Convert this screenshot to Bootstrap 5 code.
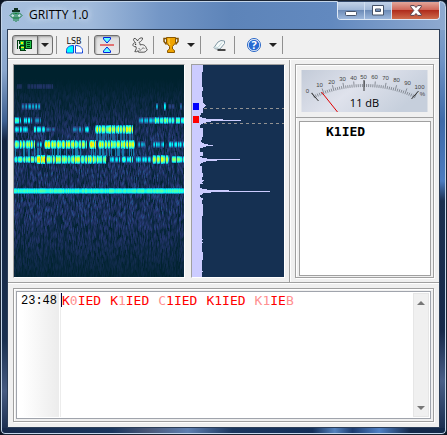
<!DOCTYPE html>
<html lang="en">
<head>
<meta charset="utf-8">
<meta name="viewport" content="width=device-width, initial-scale=1">
<title>GRITTY 1.0</title>
<link rel="stylesheet" href="https://cdn.jsdelivr.net/npm/bootstrap@5.3.0/dist/css/bootstrap.min.css">
<style>
body { background: #0b1422; font-family: "Open Sans", "Noto Sans", sans-serif; font-size: 12px; color: #000; }
svg { display: block; }
button { color: inherit; }
.app-window {
  border: 1px solid #1a2433; border-radius: 7px 7px 5px 5px; padding: 0 6px 6px;
  box-shadow: inset 0 0 0 1px #c3d5ea;
  background:
    linear-gradient(90deg, #a6bfde 0, #a0badb 90px, #7396c6 160px, #5d84b9 230px, #6289bf 330px, #8faad0 100%) top / 100% 29px no-repeat,
    linear-gradient(90deg, #16294a 0, #1b375f 25%, #4a5878 33%, #5f7fb0 42%, #1c375f 52%, #14305a 70%, #5482bd 75%, #1c3c70 79%, #4f80c4 85%, #14294a 92%) bottom / 100% 6px no-repeat,
    linear-gradient(180deg, #8faacd 0, #6f93c5 60px, #3e6aa8 120px, #4c7cc0 180px, #1b3050 200px, #16294a 330px, #4a5f88 380px, #16294a 100%) right / 8px 100% no-repeat,
    linear-gradient(180deg, #a6bfde 0, #8aa6cc 70px, #3d5f90 120px, #14233e 140px, #1a3050 340px, #465a80 390px, #16294a 100%);
}
.title-bar { height: 28px; padding-left: 2px; gap: 6px; }
.title-bar > svg { margin-top: 7px; }
.title-bar h1 { font-size: 12px; line-height: 28px; text-shadow: 0 0 6px #dbe7f6, 0 0 6px #dbe7f6; }
.caption-group { height: 19px; border: 1px solid #dfe9f5; border-top-color: #34496b; border-radius: 0 0 4px 4px; overflow: hidden; }
.caption-group button { width: 27px; border: 0; border-right: 1px solid #d0def0; background: linear-gradient(#c2d2e8 0, #a0b7d7 45%, #6d8cb8 50%, #9db8dc 100%); }
.caption-group .close-window { width: 47px; border-right: 0; background: linear-gradient(#e2a79b 0, #d0685a 45%, #b02d1c 50%, #ce6c4c 100%); }
.client-area { border: 1px solid #2c3e58; background: #f0f0f0; }
.tool-strip { height: 29px; padding: 5px 0 3px 4px; border-bottom: 1px solid #a0a0a0; }
.tool-strip .btn { --bs-btn-padding-x: 0; --bs-btn-padding-y: 0; --bs-btn-border-radius: 3px; height: 20px; line-height: 1; }
.tool-strip .pressed { border: 1px solid #6f6f6f; background: linear-gradient(#dcdcdc, #ececec); box-shadow: inset 1px 1px 2px #a0a0a0; }
.tool-strip .btn-group .pressed:first-child { padding: 0 3px; }
.tool-strip .btn-group .pressed:last-child { width: 16px; }
.tool-strip .tool-plain { border: 0; padding-left: 4px; }
.tool-strip .tool-wide { border: 0; padding-left: 7px; padding-right: 2px; }
.tool-sep { width: 1px; height: 18px; margin: 0 5px; background: #909090; }
.btn-group + .tool-sep { margin-left: 3px; }
.caret-mark { width: 0; height: 0; border: 4px solid transparent; border-top-color: #222; border-bottom: 0; }
.top-area { border-top: 1px solid #fff; border-bottom: 1px solid #a0a0a0; }
.scope-area { flex: 272 1 0; padding: 4px 4px 4px 5px; gap: 6px; border-right: 1px solid #a0a0a0; }
.side-area { flex: 139 1 0; padding: 4px 5px 4px 4px; border-left: 1px solid #fff; }
.sunken { border: 1px solid #a0a0a0; border-right-color: #fff; border-bottom-color: #fff; }
.waterfall { flex: 170 1 0; }
.spectrum { flex: 92 1 0; }
.waterfall canvas, .spectrum svg { display: block; width: 100%; height: 212px; }
.framed { border: 1px solid #a0a0a0; box-shadow: 1px 1px 0 #fff, inset 1px 1px 0 #fff; }
.meter-box { padding: 5px; border-bottom: 1px solid #a0a0a0; }
.meter-box svg { width: 100%; height: 42px; }
.calls-box { padding: 3px 2px 1px 3px; }
.calls-list { border: 1px solid #a0a0a0; background: #fff; padding: 1px 26px; font: bold 13px/18px "DejaVu Sans Mono", monospace; }
.log-area { border-top: 1px solid #fff; padding: 4px 5px 5px; }
.log-outer { padding: 2px; }
.log-inner { border: 1px solid #a0a4ac; background: #fff; padding: 1px; }
.time-gutter { width: 41px; padding-left: 3px; background: linear-gradient(90deg, #fff 10%, #ececec); font: 12px/16px "Liberation Mono", monospace; }
.decoded { border-left: 1px solid #ececec; margin-left: 1px; gap: 9px; font: 13px/16px "DejaVu Sans Mono", monospace; color: #f00; }
.decoded .weak { color: #ff9090; }
.decoded > :first-child { border-left: 1px solid #000040; height: 14px; }
.log-scroll { width: 16px; background: #f0f0f0; border: 1px solid #e6e6e6; }
.log-scroll button { height: 17px; border: 0; background: none; }
</style>
</head>
<body>
<div class="app-window d-flex flex-column min-vh-100">
  <header class="title-bar d-flex align-items-start">
    <svg width="14" height="14" viewBox="0 0 14 14" aria-hidden="true"><path d="M5 0h4v2h2v2H3V2h2z" fill="#132"/><path d="M7 4v10M5 5v8M9 5v8" stroke="#12823b" fill="none"/><path d="M1 7.500L3.500 5H6l1 1 1-1h2.500L13 7.500 10.500 10H3.500z" stroke="#12823b" fill="none"/><path d="M3 7h2v1.500H3zM9 7h2v1.500H9z" fill="#c9f0d2"/></svg>
    <h1 class="mb-0 fw-normal flex-grow-1">GRITTY 1.0</h1>
    <div class="caption-group d-flex">
      <button type="button" class="p-0 d-flex justify-content-center align-items-center" aria-label="Minimize"><svg width="12" height="13" viewBox="0 0 12 13"><rect x=".5" y="7.500" width="11" height="4" rx="1" fill="#fff" stroke="#465369"/></svg></button>
      <button type="button" class="p-0 d-flex justify-content-center align-items-center" aria-label="Maximize"><svg width="12" height="11" viewBox="0 0 12 11"><path fill-rule="evenodd" d="M.5.5h11v9.500H.5zM3.500 4h5v2.500h-5z" fill="#fff" stroke="#465369"/></svg></button>
      <button type="button" class="close-window p-0 d-flex justify-content-center align-items-center" aria-label="Close"><svg width="12" height="11" viewBox="0 0 12 11"><path d="M.7.600h3.600L6 2.500 7.700.600h3.600v1.200L8.200 5.500l3.100 3.700v1.200H7.700L6 8.500l-1.700 1.900H.7V9.200l3.100-3.700L.7 1.800z" fill="#fff" stroke="#573f4a"/></svg></button>
    </div>
  </header>

  <main class="client-area flex-grow-1 d-flex flex-column">
    <div class="tool-strip d-flex align-items-center" role="toolbar" aria-label="Main">
      <div class="btn-group">
        <button type="button" class="btn pressed" aria-label="Receive"><svg width="18" height="14" viewBox="0 0 18 14" shape-rendering="crispEdges"><path d="M1 2h3v1H2v8H1zM4 2h12v9h-6v2H4v-2H3V3h1z" fill="#003c10"/><path d="M4 3h4v4H4zM5 8h3v4H5zM10 3h5v7h-5z" fill="#1fbf45"/><path d="M5 4h2v2H5zM5 9h3v1H5z" fill="#f5f500"/><path d="M8 3h1v7H8zM11 4h3v1h-3zM11 6h3v1h-3zM11 8h3v1h-3z" fill="#00330c"/><path d="M3 6h1v2H3zM9 11h1v1H9z" fill="#c8ffd0"/></svg></button>
        <button type="button" class="btn pressed d-flex align-items-center justify-content-center" aria-label="Receive options"><span class="caret-mark"></span></button>
      </div>
      <span class="tool-sep"></span>
      <button type="button" class="btn tool-plain" aria-label="LSB"><svg width="17" height="18" viewBox="0 0 17 18"><text x="8" y="8" text-anchor="middle" font-family="DejaVu Sans, sans-serif" font-size="8" fill="#111">LSB</text><path d="M.5 17v-2.500C.5 11.500 3 9.500 7.500 9.500V17z" fill="#0ff" stroke="#1446d8"/><path d="M9.500 17V9.500c4 0 7 2 7 5V17z" fill="#fff" stroke="#1446d8"/></svg></button>
      <span class="tool-sep"></span>
      <button type="button" class="btn pressed px-1" aria-label="Center frequency"><svg width="16" height="18" viewBox="0 0 16 18"><path d="M4.500 1.500h7v1.500l-3.500 4-3.500-4zM8 11l3.500 4v1.500h-7V15z" fill="#6ff" stroke="#0022e0"/><path d="M1 9h14" stroke="#e00000"/></svg></button>
      <button type="button" class="btn tool-plain ms-2" aria-label="Fast mode"><svg width="16" height="16" viewBox="0 0 16 16"><path d="M3.500 5.500C1.500 4 1 2.500 2 1.500 3.500 1 5 2.500 5.500 4 6.500 1.500 9 .3 10.500 1 11 2.500 9 4.500 7 5.500c1 .8 1.200 1.800 1 2.500 3-1.200 6 .5 6.300 3.500 1.200.2 1.200 2 0 2.200-.5 1-1.300 1.500-2.500 1.500H6.500l-.3-1.500-1.500 1H2.800l1.500-3-.3-2C2 9.800.8 9 .9 7.800 1 6.500 2 5.800 3.500 5.500z" fill="#ededed" stroke="#444" stroke-width=".9"/><circle cx="3.600" cy="7.300" r=".7" fill="#222"/><path d="M6.500 11.500c1.500 0 2 1 1.500 2.500M9.500 12.500c.5-1.500 2-2 3-1" stroke="#555" stroke-width=".8" fill="none"/></svg></button>
      <span class="tool-sep"></span>
      <button type="button" class="btn tool-plain d-flex align-items-center" aria-label="Scores"><svg width="16" height="16" viewBox="0 0 16 16"><path d="M4 1.500H1v3l2.500 3M12 1.500h3v3l-2.500 3" stroke="#805000" stroke-width="1.500" fill="none"/><path d="M3.500.5h9v5.500L9.500 9.500V12l2 1.500v2h-7v-2l2-1.500V9.500L3.500 6z" fill="#f0a400" stroke="#8a5800"/><path d="M6 1.500V6l1 2" stroke="#ffe070" fill="none"/></svg><span class="caret-mark ms-2"></span></button>
      <span class="tool-sep"></span>
      <button type="button" class="btn tool-wide" aria-label="Clear"><svg width="14" height="12" viewBox="0 0 14 12"><path d="M1 8.500l4-5.500 3-1.500 3.500.5L11.500 4.500 7 10H2.500z" fill="#f5fafa" stroke="#8298a4"/><path d="M1.500 8L5 8.500 9 3.500" stroke="#c0d6da" fill="none"/><path d="M4.500 11h8" stroke="#111" stroke-width="1.500"/></svg></button>
      <span class="tool-sep"></span>
      <button type="button" class="btn tool-wide pe-0 d-flex align-items-center" aria-label="Help"><svg width="14" height="14" viewBox="0 0 14 14"><circle cx="7" cy="7" r="6.500" fill="#fff" stroke="#2463c5"/><circle cx="7" cy="7" r="5.300" fill="#286bd2"/><text x="7" y="11" text-anchor="middle" font-family="Open Sans, sans-serif" font-weight="700" font-size="11" fill="#fff">?</text></svg><span class="caret-mark ms-2"></span></button>
      <span class="tool-sep"></span>
    </div>

    <section class="top-area d-flex">
      <div class="scope-area d-flex">
        <div class="sunken waterfall"><canvas id="waterfall" width="170" height="212" role="img" aria-label="Waterfall"></canvas></div>
        <div class="sunken spectrum">
          <svg viewBox="0 0 92 212" preserveAspectRatio="none" shape-rendering="crispEdges" role="img" aria-label="Spectrum">
            <rect width="92" height="212" fill="#153052"/>
            <path id="trace" fill="#ccccff"/>
            <path d="M12 43.500h80M12 58.500h80" stroke="#929292" stroke-dasharray="3 3"/>
            <rect x="1" y="38" width="6" height="7" fill="#00f"/>
            <rect x="1" y="51" width="6" height="7" fill="#f00"/>
          </svg>
        </div>
      </div>
      <div class="side-area d-flex flex-column">
        <div class="framed flex-grow-1 d-flex flex-column">
          <div class="meter-box">
            <svg viewBox="0 0 126 42" role="img" aria-label="Signal to noise meter">
              <defs><linearGradient id="dial" x2="1" y2=".4"><stop stop-color="#c3cbd8"/><stop offset=".5" stop-color="#dfe2ec"/><stop offset="1" stop-color="#c6cfdc"/></linearGradient></defs>
              <rect width="126" height="42" fill="url(#dial)"/>
              <path id="ticks" stroke="#666b74" stroke-width=".7" fill="none"/>
              <path d="M10 23l7 8M62.500 10v11M117 21l-7 8" stroke="#333" fill="none"/>
              <path d="M20 22l16 20" stroke="#e00000"/>
              <g id="scale" font-family="Liberation Sans, sans-serif" font-size="6" fill="#444" text-anchor="middle"></g>
              <text x="63" y="37" text-anchor="middle" font-family="Open Sans, sans-serif" font-size="11">11 dB</text>
            </svg>
          </div>
          <div class="calls-box flex-grow-1 d-flex flex-column"><ul class="calls-list list-unstyled mb-0 flex-grow-1"><li>K1IED</li></ul></div>
        </div>
      </div>
    </section>

    <section class="log-area flex-grow-1 d-flex">
      <div class="framed log-outer flex-grow-1 d-flex">
        <div class="log-inner flex-grow-1 d-flex">
          <div class="time-gutter">23:48</div>
          <div class="decoded flex-grow-1 d-flex align-items-start">
            <span>K<span class="weak">0</span>IED</span>
            <span>K<span class="weak">1</span>IED</span>
            <span><span class="weak">C</span>1IED</span>
            <span>K1IED</span>
            <span><span class="weak">K1</span>IE<span class="weak">B</span></span>
          </div>
          <div class="log-scroll d-flex flex-column justify-content-between">
            <button type="button" class="p-0 d-flex justify-content-center align-items-center" aria-label="Scroll up"><svg width="8" height="4" viewBox="0 0 8 4"><path d="M0 4l4-4 4 4z" fill="#777"/></svg></button>
            <button type="button" class="p-0 d-flex justify-content-center align-items-center" aria-label="Scroll down"><svg width="8" height="4" viewBox="0 0 8 4"><path d="M0 0l4 4 4-4z" fill="#777"/></svg></button>
          </div>
        </div>
      </div>
    </section>
  </main>
</div>

<script src="https://cdn.jsdelivr.net/npm/bootstrap@5.3.0/dist/js/bootstrap.bundle.min.js"></script>
<script>
let seed = 4711;
const rnd = () => (seed = (seed * 16807) % 2147483647) / 2147483647;

/* Waterfall: time runs along x, frequency along y */
const W = 170, H = 212, level = new Float32Array(W * H);
const envelope = y => y < 12 ? 0 : y < 70 ? (y - 12) / 58 : y < 150 ? 1 : Math.max(0.05, 1 - (y - 150) / 75);
for (let x = 0; x < W; x++) {
  for (let y = -4 - x % 3; y < H; y += 3) {
    const v = Math.pow(rnd(), 1.4) * 0.42 * envelope(y);
    for (let k = 0; k < 6; k++) {
      const p = y + k;
      if (p >= 0 && p < H) level[p * W + x] = Math.max(level[p * W + x], v * (1 - Math.abs(k - 2.5) * 0.15));
    }
  }
}
/* [centre, half height, start, end, strength] */
const bands = [
  [21, 2, 3, 8, .2], [21, 2, 13, 39, .25],
  [41, 3, 7, 27, .5], [41, 3, 142, 144, .55], [41, 4, 150, 152, .6], [41, 2, 154, 161, .35], [41, 3, 166, 168, .4],
  [55, 3, 0, 7, .65], [55, 3, 9, 18, .6], [55, 3, 20, 27, .45], [55, 3, 124, 140, .55], [55, 3, 140, 161, .75], [55, 3, 161, 170, .68],
  [64, 3, 0, 14, .6], [64, 3, 19, 31, .66], [64, 2, 31, 41, .45], [64, 3, 58, 69, .48], [64, 3, 71, 75, .6], [64, 4, 81, 119, .86],
  [79, 4, 0, 21, .82], [79, 3, 22, 28, .55], [79, 4, 30, 60, .86], [79, 4, 60, 73, .78], [79, 4, 75, 82, .95], [79, 4, 84, 121, .86], [79, 3, 123, 132, .55], [79, 3, 138, 150, .55], [79, 3, 154, 170, .58],
  [94, 3, 0, 22, .76], [94, 4, 22, 31, .98], [94, 4, 32, 92, .82], [94, 3, 95, 106, .62], [94, 3, 107, 119, .68], [94, 3, 121, 138, .6], [94, 4, 138, 155, .84], [94, 3, 157, 170, .74]
];
for (const [c, h, a, b, s] of bands) {
  let keyed = 1, left = 0;
  for (let x = a; x < b; x++) {
    if (left-- <= 0) { keyed = keyed < 1 || b - a < 6 ? 1 : s > .7 ? .64 : .5; left = keyed < 1 ? 0 : 1 + Math.floor(rnd() * 4); }
    const v = s * keyed * (.85 + rnd() * .25);
    for (let y = c - h; y <= c + h; y++) {
      const w = 1 - Math.pow(Math.abs(y - c) / (h + 1), 2) * .6;
      level[y * W + x] = Math.max(level[y * W + x], v * w);
    }
    if (keyed === 1 && c === 79 && a < 122 && rnd() > .45) for (let y = 83; y < 91; y++) level[y * W + x] = Math.max(level[y * W + x], .45);
    if (keyed === 1 && c === 64 && a === 81 && rnd() > .4) for (let y = 68; y < 76; y++) level[y * W + x] = Math.max(level[y * W + x], .42);
  }
}
for (let x = 0; x < W; x++) {
  const v = .62 + rnd() * .1;
  [.75, .92, 1, 1, .92, .7].forEach((w, i) => level[(123 + i) * W + x] = v * w);
}
const stops = [[0, 0, 34, 46], [.3, 38, 54, 112], [.4, 34, 84, 140], [.5, 10, 160, 200], [.6, 0, 250, 255], [.75, 110, 255, 140], [.88, 240, 255, 10], [1.1, 255, 170, 0]];
const ctx = document.getElementById('waterfall').getContext('2d');
const image = ctx.createImageData(W, H);
level.forEach((v, i) => {
  let n = 1;
  while (n < stops.length - 1 && v > stops[n][0]) n++;
  const p = stops[n - 1], q = stops[n], t = Math.min(1, (v - p[0]) / (q[0] - p[0]));
  for (let k = 0; k < 3; k++) image.data[i * 4 + k] = p[k + 1] + (q[k + 1] - p[k + 1]) * t;
  image.data[i * 4 + 3] = 255;
});
ctx.putImageData(image, 0, 0);

/* Spectrum trace: one row per frequency bin */
const peaks = { 38: 12, 39: 13, 40: 14, 41: 13, 42: 12, 48: 9, 49: 9, 50: 8, 51: 8, 52: 10, 53: 14, 54: 31, 55: 49, 56: 19, 57: 14, 58: 11, 59: 9, 60: 8, 61: 8, 62: 8,
  75: 9, 76: 9, 77: 10, 78: 12, 79: 16, 80: 21, 81: 14, 82: 11, 83: 8, 84: 8, 85: 8, 86: 8, 91: 8, 92: 10, 93: 15, 94: 48, 95: 25, 96: 14, 97: 11, 98: 9, 99: 8, 100: 8,
  115: 12, 116: 11, 119: 8, 120: 8, 121: 8, 122: 8, 123: 10, 124: 15, 125: 37, 126: 78, 127: 19, 128: 11, 129: 10, 130: 8, 131: 8, 132: 9 };
let trace = '', edge = 11;
for (let y = 0; y < H; y++) {
  if (rnd() > .8) edge = 10 + Math.floor(rnd() * 2);
  trace += `M0 ${y}h${peaks[y] ?? edge}v1H0z`;
}
document.getElementById('trace').setAttribute('d', trace);

/* Meter scale */
let ticks = '';
for (let i = 0; i <= 50; i++) {
  const a = (i / 50 * 50 - 25) * Math.PI / 180, r = i % 5 ? 121 : 124;
  ticks += `M${63 + 118 * Math.sin(a)} ${135 - 118 * Math.cos(a)}L${63 + r * Math.sin(a)} ${135 - r * Math.cos(a)}`;
}
document.getElementById('ticks').setAttribute('d', ticks);
[['0', 6, 23], ['10', 18, 17], ['20', 30, 14], ['30', 41, 11], ['40', 52, 10], ['50', 62, 9], ['60', 73, 9], ['70', 84, 10], ['80', 95, 12], ['90', 106, 15], ['100', 118, 19], ['%', 121, 26]].forEach(([s, x, y]) => {
  const t = document.createElementNS('http://www.w3.org/2000/svg', 'text');
  t.setAttribute('x', x); t.setAttribute('y', y); t.textContent = s;
  document.getElementById('scale').append(t);
});
</script>
</body>
</html>
